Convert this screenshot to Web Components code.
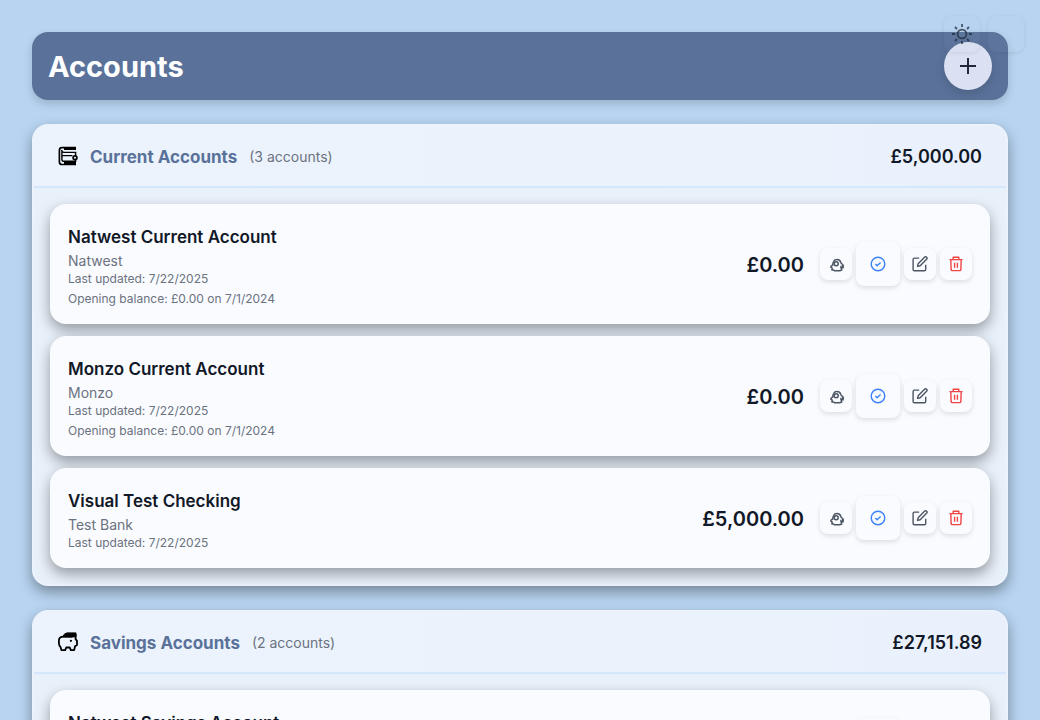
<!DOCTYPE html>
<html lang="en">
<head>
<meta charset="utf-8">
<meta name="viewport" content="width=device-width, initial-scale=1">
<title>Accounts</title>
<style>
  html { background: #b8d4f1; }
  body {
    margin: 0;
    font-family: Inter, "Liberation Sans", sans-serif;
    color: #111827;
    --ink: #111827;
    --muted: #6b7280;
    --brand: #5a729a;
    --surface: #fafbff;
  }
</style>
</head>
<body>
<accounts-page></accounts-page>

<script>
const icons = {
  plus: '<svg viewBox="0 0 24 24" fill="none" stroke="currentColor" stroke-width="2"><path d="M12 4v16M4 12h16"/></svg>',
  sun: '<svg viewBox="0 0 20 20" fill="none" stroke="currentColor" stroke-width="1.8"><circle cx="10" cy="10" r="4.4"/><path d="M10 0v3M10 17v3M0 10h3M17 10h3M3 3l2 2M15 15l2 2M3 17l2-2M15 5l2-2"/></svg>',
  wallet: '<svg viewBox="0 0 20 20" fill="none" stroke="#000" stroke-width="1.7"><path d="M18 1.6H4Q1.4 1.6 1.4 4.2V16Q1.4 18.5 4 18.5H18"/><path d="M6 2.6H18M6 17.3H18" stroke-width="2.8"/><path d="M3.6 4Q3.8 6.4 6 6.4H17.6V9.8M4 9.6H14.4M17.6 13.6V15.3H5.4Q3.9 15.3 3.9 13V5" stroke-width="1.4"/><circle cx="17" cy="11.7" r="1.9"/></svg>',
  piggy: '<svg viewBox="0 0 20 20" fill="none" stroke="#000" stroke-width="1.8" stroke-linejoin="round"><path d="M5.5 4.6h8L17.6 3v4.2L19 8.8V13l-2 1.2-.8 3.9h-3.4l-1-2.6H8.2l-1 2.6H3.4l-.8-2.9Q.9 13.5.9 11V8.6q0-4 4.6-4Z"/><path d="M4.8 4.8Q6.4.9 9 .9h9v3.7L13.5 5Z" fill="#000" stroke-width="1"/><circle cx="12.9" cy="8.8" r="1.1" fill="#000" stroke="none"/></svg>',
  adjust: '<svg viewBox="0 0 16 16" fill="none" stroke="currentColor" stroke-width="1.5" stroke-linejoin="round"><path d="M4.8 4.4Q5.6 2.6 8 2.6q2.8 0 3.6 2.3.5 2 1.9 2.5 1 1 .6 2.6l-1.6.6.2 2.4-2 .8H5.6L4.6 13H2.9l.3-1.8-1.4-1 .5-1.4 1.5-.8Q3.6 6 4.8 4.4Z"/><circle cx="7.2" cy="6.8" r="2"/><path d="M12 8.8v2.8M14 8v3.6"/></svg>',
  check: '<svg viewBox="0 0 16 16" fill="none" stroke="currentColor" stroke-width="1.4"><circle cx="8" cy="8" r="6.8"/><path d="m5.4 8.1 1.7 1.7 3.5-3.2"/></svg>',
  edit: '<svg viewBox="0 0 16 16" fill="none" stroke="currentColor" stroke-width="1.4" stroke-linejoin="round"><path d="M7.2 2.1H2.4Q1.1 2.1 1.1 3.4v10q0 1.3 1.3 1.3h10q1.3 0 1.3-1.3V8.8"/><path d="M12.5 1.2a1.45 1.45 0 0 1 2.1 2.1L8.2 9.7l-2.7.7.7-2.7Z"/></svg>',
  trash: '<svg viewBox="0 0 16 16" fill="none" stroke="currentColor" stroke-width="1.4" stroke-linejoin="round"><path d="M1.5 3.6h13M5.2 3.4V1.3h5.6v2.1M2.8 3.8l.3 9.6q.1 1.2 1.3 1.2h7.2q1.2 0 1.3-1.2l.3-9.6M6.6 6.7v5M9.4 6.7v5"/></svg>'
};

function define(name, css, html, connected) {
  const template = document.createElement('template');
  template.innerHTML = `<style>*,*::before{box-sizing:border-box}svg{display:block}${css}</style>${html}`;
  customElements.define(name, class extends HTMLElement {
    connectedCallback() {
      if (this.shadowRoot) return;
      this.attachShadow({ mode: 'open' }).append(template.content.cloneNode(true));
      if (connected) connected(this, this.shadowRoot);
    }
  });
}

define('icon-button', `
  :host { display: block; }
  button {
    display: grid; place-items: center; width: 32px; height: 32px; padding: 0; border: 0;
    border-radius: 8px; background: var(--surface); color: #4b5563; cursor: pointer;
    box-shadow: 0 2px 5px rgb(0 0 0 / .12);
  }
  svg { width: 16px; height: 16px; }
  :host([size=large]) button { width: 44px; height: 44px; }
  :host([tone=blue]) button { color: #3b82f6; }
  :host([tone=red]) button { color: #ef4444; }
  :host([variant=round]) button {
    width: 48px; height: 48px; border-radius: 24px; background: #dbe1f2; color: #1f2937;
    box-shadow: 0 4px 10px rgb(0 0 0 / .14);
  }
  :host([variant=ghost]) button {
    width: 36px; height: 36px; background: rgb(184 212 241 / .04); color: #1f2937;
    box-shadow: 0 1px 4px rgb(0 0 0 / .08);
  }
  :host([variant=ghost]) svg { width: 20px; height: 20px; opacity: .75; }
  :host([variant=round]) svg { width: 24px; height: 24px; }
  :host([icon=adjust]) button { padding: 2px 0 0 2px; }
`, '<button type="button"></button>', (host, root) => {
  const button = root.querySelector('button');
  button.innerHTML = icons[host.getAttribute('icon')] || '';
  button.setAttribute('aria-label', host.getAttribute('label'));
});

define('page-header', `
  :host {
    display: flex; align-items: center; justify-content: space-between; padding: 10px 16px;
    border-radius: 16px; background: var(--brand); box-shadow: 0 4px 8px rgb(0 0 0 / .16);
  }
  h1 { margin: 0; padding-top: 2px; font-size: 29px; line-height: 36px; font-weight: 700; color: #fff; }
`, '<h1><slot></slot></h1><slot name="action"></slot>');

define('floating-tools', `
  :host { position: absolute; top: 16px; right: 16px; display: flex; gap: 8px; }
`, '<slot></slot>');

define('account-group', `
  :host { display: block; }
  section {
    border: 2px solid #ecf3fd; border-radius: 16px; background: #e8f0fa;
    box-shadow: 0 6px 14px rgb(0 0 0 / .36);
  }
  header {
    display: flex; align-items: center; gap: 12px; padding: 17px 24px 15px;
    border-bottom: 2px solid #d5e7fb; border-radius: 14px 14px 0 0;
    background: linear-gradient(90deg, #ecf3fd, #eaf2fc 80%, #e9f0fc);
  }
  .icon { padding-bottom: 2px; }
  svg { width: 20px; height: 20px; }
  h2 { margin: 0; font-size: 17px; line-height: 28px; font-weight: 700; color: var(--brand); }
  .count { font-size: 14px; line-height: 20px; color: var(--muted); }
  .total { margin-left: auto; font-size: 18px; line-height: 28px; font-weight: 600; color: var(--ink); }
  .list { display: grid; gap: 12px; padding: 16px; }
`, `<section><header><span class="icon"></span><h2></h2><span class="count"></span><span class="total"></span></header>
  <div class="list"><slot></slot></div></section>`, (host, root) => {
  root.querySelector('.icon').innerHTML = icons[host.getAttribute('icon')];
  root.querySelector('h2').textContent = host.getAttribute('name');
  root.querySelector('.count').textContent = `(${host.getAttribute('count')} accounts)`;
  root.querySelector('.total').textContent = host.getAttribute('total');
});

define('account-card', `
  :host {
    display: flex; align-items: center; justify-content: space-between; gap: 16px;
    padding: 17px 18px; border-radius: 16px; background: var(--surface);
    box-shadow: 0 6px 14px rgb(0 0 0 / .36);
  }
  .details, .balance { padding-top: 2px; }
  h3 { margin: 0; font-size: 17px; line-height: 28px; font-weight: 600; color: var(--ink); }
  p { margin: 0; font-size: 12px; line-height: 16px; color: var(--muted); }
  .bank { font-size: 14px; line-height: 20px; }
  .opening { margin-top: 4px; }
  .side { display: flex; align-items: center; gap: 16px; }
  .balance { font-size: 20px; line-height: 28px; font-weight: 600; color: var(--ink); }
  .actions { display: flex; align-items: center; gap: 4px; }
`, `<div class="details"><h3></h3><p class="bank"></p><p class="updated"></p><p class="opening"></p></div>
  <div class="side"><span class="balance"></span><div class="actions">
    <icon-button icon="adjust" label="Adjust balance"></icon-button>
    <icon-button icon="check" size="large" tone="blue" label="Reconcile"></icon-button>
    <icon-button icon="edit" label="Edit account"></icon-button>
    <icon-button icon="trash" tone="red" label="Delete account"></icon-button>
  </div></div>`, (host, root) => {
  root.querySelector('h3').textContent = host.getAttribute('name');
  root.querySelector('.bank').textContent = host.getAttribute('bank');
  root.querySelector('.updated').textContent = `Last updated: ${host.getAttribute('updated')}`;
  root.querySelector('.balance').textContent = host.getAttribute('balance');
  const opening = root.querySelector('.opening');
  if (host.hasAttribute('opening')) opening.textContent = `Opening balance: ${host.getAttribute('opening')}`;
  else opening.remove();
});

define('accounts-page', `
  :host { display: block; }
  main { display: grid; gap: 24px; padding: 32px; }
`, `<main>
  <page-header>Accounts<icon-button slot="action" icon="plus" variant="round" label="Add account"></icon-button></page-header>
  <account-group icon="wallet" name="Current Accounts" count="3" total="£5,000.00">
    <account-card name="Natwest Current Account" bank="Natwest" updated="7/22/2025" opening="£0.00 on 7/1/2024" balance="£0.00"></account-card>
    <account-card name="Monzo Current Account" bank="Monzo" updated="7/22/2025" opening="£0.00 on 7/1/2024" balance="£0.00"></account-card>
    <account-card name="Visual Test Checking" bank="Test Bank" updated="7/22/2025" balance="£5,000.00"></account-card>
  </account-group>
  <account-group icon="piggy" name="Savings Accounts" count="2" total="£27,151.89">
    <account-card name="Natwest Savings Account" bank="Natwest" updated="7/22/2025" balance="£27,151.89"></account-card>
  </account-group>
</main>
<floating-tools>
  <icon-button icon="sun" variant="ghost" label="Toggle theme"></icon-button>
  <icon-button variant="ghost" label="More options"></icon-button>
</floating-tools>`);
</script>
</body>
</html>
